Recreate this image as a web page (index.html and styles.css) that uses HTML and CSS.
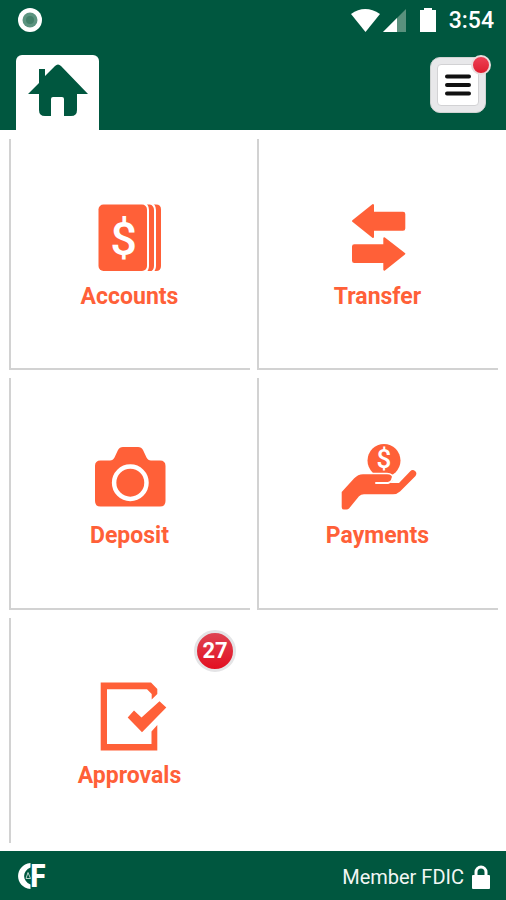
FILE: index.html
```html
<!DOCTYPE html>
<html lang="en">
<head>
<meta charset="utf-8">
<meta name="viewport" content="width=device-width, initial-scale=1">
<title>Home</title>
<link rel="stylesheet" href="styles.css">
</head>
<body>
<header class="header">
  <div class="status">
    <svg class="record" viewBox="0 0 24 24" aria-hidden="true"><circle cx="12" cy="12" r="12" fill="#fff"/><circle cx="12" cy="12" r="7.5" fill="#5c9480"/><circle cx="12" cy="12" r="4" fill="#438069"/></svg>
    <div class="status-right">
      <svg class="signals" viewBox="0 0 86 26" aria-hidden="true">
        <path d="M0 7 Q14 -3 29 7 L14.500 25Z" fill="#fff"/>
        <path d="M32 25 55 2V25Z" fill="#5a917d"/><path d="M32 25 46 11V25Z" fill="#fff"/>
        <path d="M70 3h3V1h8v2h4v22H69V3Z" fill="#fff"/>
      </svg>
      <time class="clock">3:54</time>
    </div>
  </div>
  <nav class="nav">
    <a class="home" href="#" aria-label="Home">
      <svg viewBox="0 0 60 54" aria-hidden="true"><path d="M0 30 11 19V5h6v7L27 2q3-3 6 0L60 30H49V46q0 6-6 6H36V35q0-2-2-2H25q-2 0-2 2V52H17q-6 0-6-6V30Z" fill="#00573f"/></svg>
    </a>
    <button class="menu" type="button" aria-label="Menu">
      <span class="menu-face"><svg viewBox="0 0 28 24" aria-hidden="true"><path d="M3 3.500H25M3 12H25M3 20.500H25" stroke="#111" stroke-width="4" stroke-linecap="round"/></svg></span>
      <span class="dot"></span>
    </button>
  </nav>
</header>
<main class="tiles">
  <a class="tile" href="#">
    <svg class="icon" viewBox="0 0 80 72" aria-hidden="true">
      <path d="M57 3.500H66q5 0 5 5V65q0 5-5 5H57Z"/>
      <path class="cut" d="M60 2q5 2 5 7V65q0 5-5 7" stroke-width="2"/>
      <path class="cut" d="M53 2q5 2 5 7V65q0 5-5 7" stroke-width="2"/>
      <rect x="8.500" y="3.500" width="48.500" height="66.500" rx="5"/>
      <text class="dollar" x="33.500" y="54" font-size="47">$</text>
    </svg>
    <span class="label">Accounts</span>
  </a>
  <a class="tile" href="#">
    <svg class="icon" viewBox="0 0 80 72" aria-hidden="true">
      <path class="round" d="M15 20 35 4V11.700H65q1.300 0 1.300 1.300V27.400q0 1.300-1.300 1.300H35V36Z"/>
      <path class="round" d="M66.300 52.700 46.300 68.700V61H16.300q-1.300 0-1.300-1.300V45.600q0-1.300 1.300-1.300H46.300V37.300Z"/>
    </svg>
    <span class="label">Transfer</span>
  </a>
  <a class="tile" href="#">
    <svg class="icon" viewBox="0 0 80 72" aria-hidden="true">
      <path d="M5 26q0-5.500 5.500-5.500H20q3 0 4.500-3L28 10q1.500-3 5-3H48q3.500 0 5 3l3.500 7.500q1.500 3 4.500 3H70q5.500 0 5.500 5.500V61q0 5.500-5.500 5.500H10.500Q5 66.500 5 61Z"/>
      <circle class="cut" cx="40.300" cy="42.700" r="16.200" stroke-width="4.500"/>
    </svg>
    <span class="label">Deposit</span>
  </a>
  <a class="tile" href="#">
    <svg class="icon" viewBox="0 0 80 72" aria-hidden="true">
      <circle cx="46" cy="20.500" r="16.500"/>
      <text class="dollar" x="46" y="28" font-size="26">$</text>
      <path d="M3.700 52 16 38.500q4-4.300 9-4.300H49q5.500 0 5.500 5Q54.500 43 50 43H61L72 31.500q2.500-2.500 5-.5t.500 5L62 51.500Q59 54.300 55 54.300H26q-3 0-5 2L11 68.500q-1 1-2.500 1H6q-2.300 0-2.300-2.300Z" stroke="#fff" stroke-width="3" paint-order="stroke"/>
      <path class="cut" d="M38 43H50Q54 42 54.500 38" stroke-width="2" stroke-linecap="round"/>
    </svg>
    <span class="label">Payments</span>
  </a>
  <a class="tile" href="#">
    <svg class="icon" viewBox="0 0 80 72" aria-hidden="true">
      <path d="M10.700 2.500H61L67.300 9V14L61.700 19.500V14L57 9.300H17V64H61.500V51.500L67.300 45V70.500H10.700Z"/>
      <path d="M37.700 37.500 44 30.500 51.500 37.500 69.500 21.300 76.300 27.500 52 52.300Z"/>
    </svg>
    <span class="label">Approvals</span>
    <span class="badge">27</span>
  </a>
</main>
<footer class="footer">
  <svg class="logo" viewBox="0 0 32 32" role="img" aria-label="C&amp;F">
    <path d="M12.500 2C-4 4-4 26 12.500 28V23.500C4 20 4 10 12.500 6.500Z" fill="#fff"/>
    <path d="M8 17.500 10 11.500 12.500 17.500Z" fill="none" stroke="#b9d2c9" stroke-width="1"/>
    <text class="logo-letter" x="11" y="26">F</text>
  </svg>
  <div class="member"><span>Member FDIC</span>
    <svg class="lock" viewBox="0 0 18 24" aria-hidden="true"><path d="M4 12V7a5 5 0 0 1 10 0v5" fill="none" stroke="#fff" stroke-width="3"/><rect y="10" width="18" height="14" rx="1" fill="#fff"/></svg>
  </div>
</footer>
</body>
</html>
```
FILE: styles.css
```css
* { box-sizing: border-box; }
body {
  margin: 0;
  min-height: 100vh;
  display: flex;
  flex-direction: column;
  background: #fff;
  font-family: Roboto, sans-serif;
}
svg { display: block; }
a { color: inherit; text-decoration: none; }

.header { background: #00573f; color: #fff; }
.status {
  display: flex;
  justify-content: space-between;
  align-items: center;
  height: 40px;
  padding: 0 12px 0 18px;
}
.record { width: 24px; height: 24px; }
.status-right { display: flex; align-items: center; gap: 12px; }
.signals { width: 86px; height: 26px; }
.clock { padding-top: 2px; font-size: 23px; font-weight: 500; line-height: 38px; }

.nav {
  display: flex;
  justify-content: space-between;
  align-items: flex-end;
  height: 90px;
  padding: 0 20px 0 16px;
}
.home {
  display: flex;
  justify-content: center;
  width: 83px;
  height: 75px;
  padding-top: 9px;
  border-radius: 6px 6px 0 0;
  background: #fff;
}
.home svg { width: 60px; height: 54px; }
.menu {
  position: relative;
  width: 56px;
  height: 56px;
  margin-bottom: 17px;
  padding: 6px;
  border: 1px solid #d0d3d2;
  border-radius: 10px;
  background: #e8e8ea;
}
.menu-face {
  display: flex;
  align-items: center;
  justify-content: center;
  height: 100%;
  border: 1px solid #d2d2d4;
  border-radius: 4px;
  background: #fff;
}
.menu-face svg { width: 28px; height: 24px; }
.dot {
  position: absolute;
  top: -3px;
  right: -6px;
  width: 20px;
  height: 20px;
  border: 2px solid #e9dddd;
  border-radius: 50%;
  background: linear-gradient(#ee4055, #df1f30);
}

.tiles {
  flex: 1;
  display: grid;
  grid-template-columns: 1fr 1fr;
  grid-template-rows: 231fr 231fr 225fr;
  gap: 8px 7px;
  padding: 9px 8px 8px 9px;
}
.tile {
  position: relative;
  display: flex;
  flex-direction: column;
  align-items: center;
  gap: 10px;
  padding: 62px 2px 0 0;
  border-left: 2px solid #d2d2d2;
  border-bottom: 2px solid #d2d2d2;
  color: #ff6038;
}
.tile:last-child { border-bottom: 0; }
.icon { width: 80px; height: 72px; fill: #ff6038; }
.cut { fill: none; stroke: #fff; }
.round { stroke: #ff6038; stroke-width: 2; stroke-linejoin: round; }
.dollar {
  fill: #fff;
  font-family: Roboto, sans-serif;
  font-weight: 500;
  text-anchor: middle;
}
.label { font-size: 23px; font-weight: 700; line-height: 28px; }
.badge {
  position: absolute;
  top: 12px;
  right: 14px;
  width: 42px;
  height: 42px;
  border: 3px solid #e4e4e6;
  border-radius: 50%;
  background: linear-gradient(#de4452, #e30f20);
  color: #fff;
  font-size: 22px;
  font-weight: 700;
  line-height: 36px;
  text-align: center;
}

.footer {
  display: flex;
  justify-content: space-between;
  align-items: center;
  height: 49px;
  padding: 2px 16px 0 18px;
  background: #00573f;
  color: #f2f6f4;
  font-size: 20px;
}
.logo { width: 32px; height: 32px; overflow: visible; }
.logo-letter { fill: #fff; font: 700 32px/32px "Noto Sans", sans-serif; }
.member { display: flex; align-items: center; gap: 8px; }
.lock { width: 18px; height: 24px; }
```
